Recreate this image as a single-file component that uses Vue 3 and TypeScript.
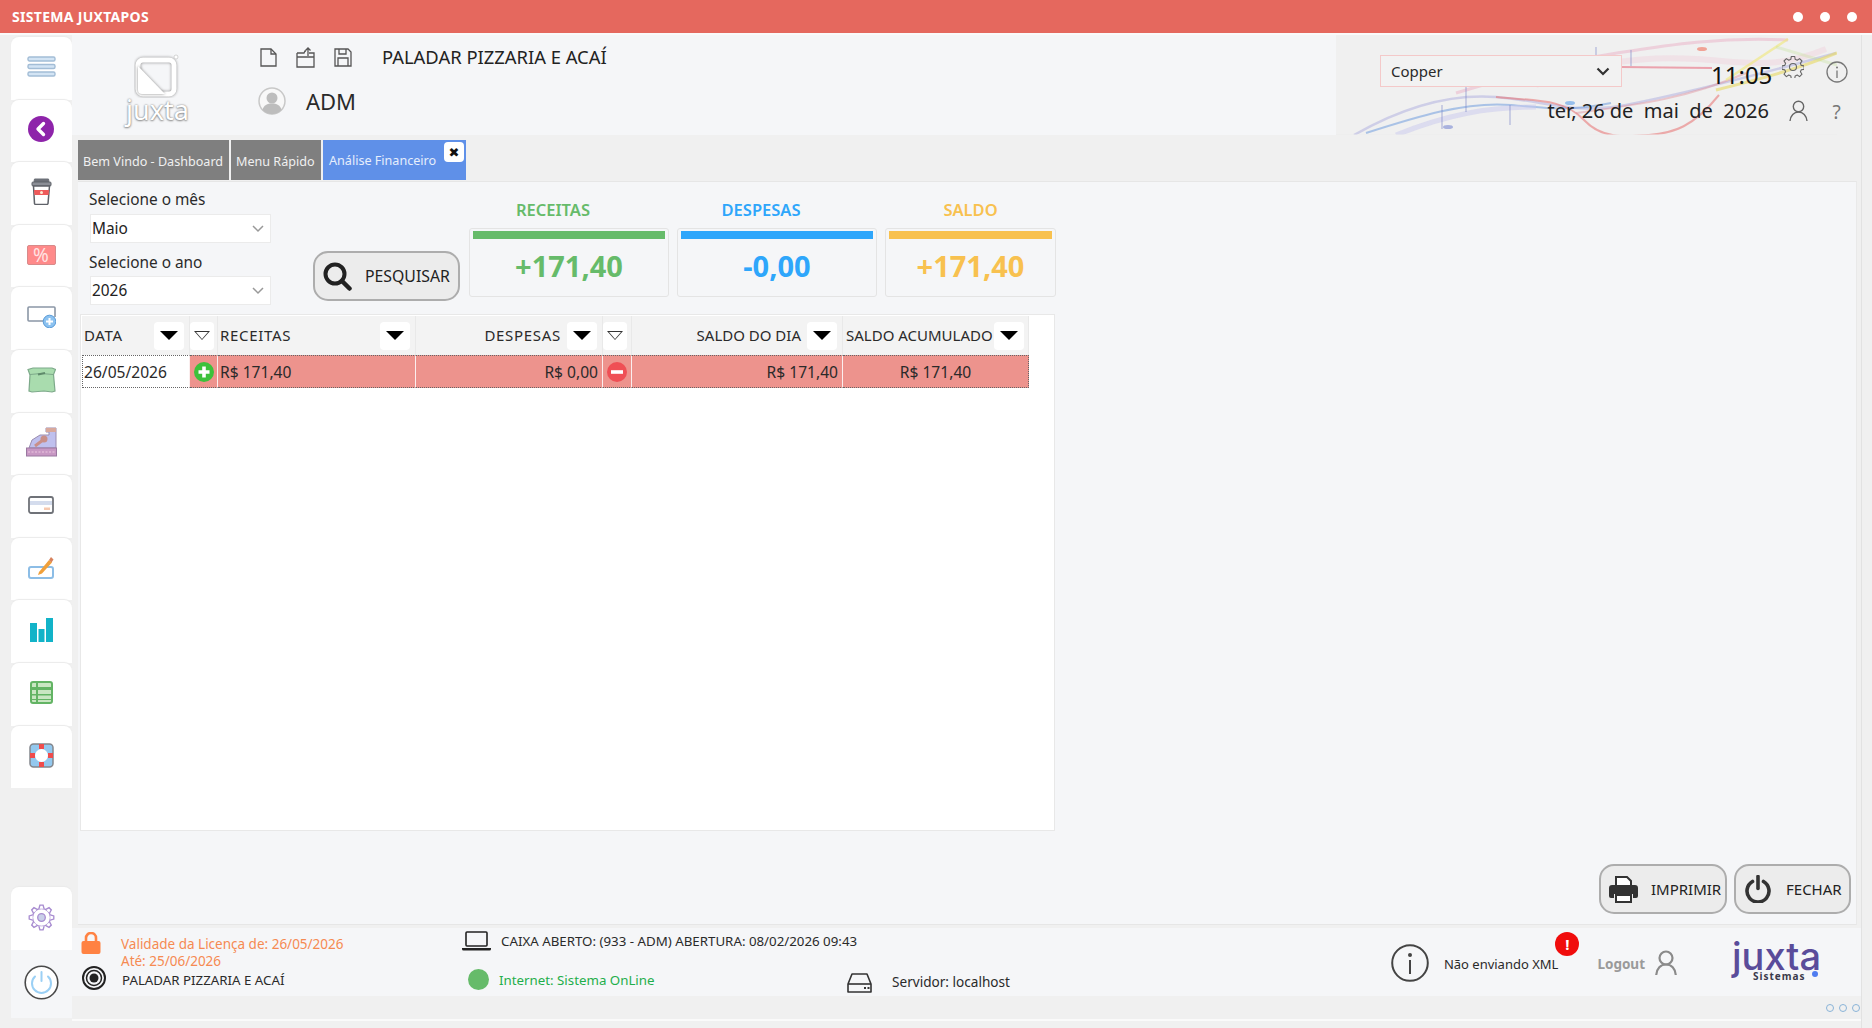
<template>
  <div class="janela">
    <div class="titulo">
      <span class="titulo-texto">SISTEMA JUXTAPOS</span>
      <div class="titulo-botoes"><i></i><i></i><i></i></div>
    </div>

    <div class="corpo">
      <!-- Menu lateral -->
      <aside class="lateral">
        <div class="lat-item">
          <svg width="29" height="21" viewBox="0 0 29 21"><g fill="#d3e4f4" stroke="#a3bdd6" stroke-width="1.4"><rect x="1" y="1" width="27" height="4" rx="1.5"/><rect x="1" y="8.5" width="27" height="4" rx="1.5"/><rect x="1" y="16" width="27" height="4" rx="1.5"/></g></svg>
        </div>
        <div class="lat-item">
          <svg width="26" height="26" viewBox="0 0 26 26"><circle cx="13" cy="13" r="13" fill="#8e24aa"/><path d="M15.5 7.5 10 13l5.500 5.500" fill="none" stroke="#fff" stroke-width="3.400" stroke-linecap="round" stroke-linejoin="round"/></svg>
        </div>
        <div class="lat-item">
          <svg width="21" height="27" viewBox="0 0 21 27"><path d="M3 3.500h15L17.500 1h-14z" fill="#6d7078" stroke="#6d7078"/><rect x="1" y="4" width="19" height="4" rx="1" fill="#8b8e96" stroke="#5f6269"/><path d="M2.500 8h16l-1.500 17.500a1.500 1.500 0 0 1-1.500 1h-10.500a1.500 1.500 0 0 1-1.500-1z" fill="#fff" stroke="#5f6269" stroke-width="1.500"/><path d="M3 12h15l-.4 5H3.400z" fill="#ee5a5a"/><circle cx="10.500" cy="14.500" r="1.500" fill="#ffe9d0"/></svg>
        </div>
        <div class="lat-item">
          <div class="icone-pct">%</div>
        </div>
        <div class="lat-item">
          <svg width="29" height="22" viewBox="0 0 29 22"><path d="M24 15H2a1 1 0 0 1-1-1V2a1 1 0 0 1 1-1h25a1 1 0 0 1 1 1v9" fill="#fff" stroke="#8b97a6" stroke-width="1.600"/><circle cx="22.500" cy="15.500" r="6.300" fill="#8cc2f0" stroke="#5a9bd8"/><path d="M22.500 12v7M19 15.500h7" stroke="#fff" stroke-width="2"/></svg>
        </div>
        <div class="lat-item">
          <svg width="29" height="26" viewBox="0 0 29 26"><path d="M1 2.500 6 1h19l3.500 1.500-2 5L28 24l-3 1-8-1-12 1-3-1 1-16z" fill="#a9dcae" stroke="#7da98a" stroke-width="1.200"/><path d="M3 7.500 14 6.500l12 1" fill="none" stroke="#7da98a"/><path d="M11 7.500l7-1.500" stroke="#5f8a6b" stroke-width="2"/></svg>
        </div>
        <div class="lat-item">
          <svg width="31" height="30" viewBox="0 0 31 30"><path d="M3 21 6 13 14 8h9V5h-3V1h10v20z" fill="#bfc0ee" stroke="#9a8cb0"/><path d="M20 1h10v4H20z" fill="#d8a89c"/><circle cx="18" cy="12" r="3.500" fill="#c98f88"/><path d="m9 19 8-6" stroke="#c98f88" stroke-width="3"/><rect x="0.500" y="21" width="30" height="8" fill="#c898c4" stroke="#9a78a0"/><path d="M2 25h27" stroke="#ecc8e0" stroke-dasharray="2 1.500"/></svg>
        </div>
        <div class="lat-item">
          <svg width="26" height="18" viewBox="0 0 26 18"><rect x="1" y="1" width="24" height="16" rx="2" fill="#fff" stroke="#6f7278" stroke-width="1.800"/><path d="M2 5h22v4H2z" fill="#d4dced"/><rect x="16" y="11.500" width="6" height="2.500" fill="#f6c9b0"/></svg>
        </div>
        <div class="lat-item">
          <svg width="26" height="23" viewBox="0 0 26 23"><rect x="1" y="11" width="24" height="11" rx="2" fill="#fff" stroke="#8cbde6" stroke-width="2"/><path d="M11 16 21 4l3 2.500-10 11-4 1.500z" fill="#f0a03a"/><path d="m21 4 2-3 2.500 2.500-2 3z" fill="#d8825c"/></svg>
        </div>
        <div class="lat-item">
          <svg width="23" height="24" viewBox="0 0 23 24"><path d="M0 5h7v19H0zM8.500 11h6v13h-6zM16 0h7v24h-7z" fill="#12b3c8"/></svg>
        </div>
        <div class="lat-item">
          <svg width="23" height="23" viewBox="0 0 23 23"><rect x="1" y="1" width="21" height="21" rx="2" fill="#c9e6c2" stroke="#63b464" stroke-width="2"/><path d="M1 6h21v3H1zM1 13h21v1.500H1zM1 18h21v1H1zM6 1h2v21H6z" fill="#63b464"/></svg>
        </div>
        <div class="lat-item">
          <svg width="25" height="25" viewBox="0 0 25 25"><rect x="1" y="1" width="23" height="23" rx="3.500" fill="#93c8ee" stroke="#83868c" stroke-width="1.500"/><path d="M10 1h5v5h-5zM10 19h5v5h-5zM1 10h5v5H1zM19 10h5v5h-5z" fill="#ef4c4c"/><circle cx="12.500" cy="12.500" r="6.500" fill="#fff"/></svg>
        </div>

        <div class="lat-item lat-config">
          <svg width="27" height="27" viewBox="-13.500 -13.500 27 27"><g fill="none" stroke="#a78bd0" stroke-width="1.300"><circle r="9"/><circle r="3.800" fill="#c9cfe8"/><g v-for="a in [0, 45, 90, 135, 180, 225, 270, 315]" :key="a" :transform="`rotate(${a})`"><path d="M-2.600-8.800-1.600-12.300H1.600L2.600-8.800" fill="#fff"/></g></g></svg>
        </div>
        <div class="lat-item lat-desligar">
          <svg width="35" height="35" viewBox="0 0 35 35"><circle cx="17.500" cy="17.500" r="16.300" fill="#fff" stroke="#4a4a4a" stroke-width="1.600"/><path d="M11 11.500a9.500 9.500 0 1 0 13 0" fill="none" stroke="#9bd0f5" stroke-width="2" stroke-linecap="round"/><path d="M17.500 7v9" stroke="#9bd0f5" stroke-width="2" stroke-linecap="round"/></svg>
        </div>
      </aside>

      <main class="principal">
        <!-- Cabecalho -->
        <header class="cabecalho">
          <div class="marca">
            <div class="logo-fantasma">
              <svg width="46" height="44" viewBox="0 0 46 44"><rect x="4" y="6" width="36" height="34" rx="5" fill="none" stroke="#fff" stroke-width="5" filter="drop-shadow(0 0 1.500px #888)"/><path d="M4 12 31 40H8a4 4 0 0 1-4-4z" fill="#fff" filter="drop-shadow(0 0 1.500px #888)"/><circle cx="42" cy="3" r="2" fill="#fff" stroke="#bbb" stroke-width=".6"/></svg>
              <span>juxta</span>
            </div>
            <div class="marca-info">
              <div class="marca-linha">
                <div class="marca-icones">
                  <svg width="17" height="19" viewBox="0 0 17 19"><path d="M1 1h10l5 5v12H1z" fill="none" stroke="#555" stroke-width="1.300"/><path d="M11 1v5h5" fill="none" stroke="#555" stroke-width="1.300"/></svg>
                  <svg width="19" height="21" viewBox="0 0 19 21"><path d="M1 6h7l1-2h1M1 6v14h17V6h-5M1 10h17" fill="none" stroke="#555" stroke-width="1.300"/><path d="M12 9V1M9.500 3.500 12 1l2.500 2.500" fill="none" stroke="#555" stroke-width="1.300"/></svg>
                  <svg width="18" height="19" viewBox="0 0 18 19"><path d="M1 1h13l3 3v14H1z" fill="none" stroke="#555" stroke-width="1.300"/><path d="M5 1v5h7V1M4 18v-8h10v8" fill="none" stroke="#555" stroke-width="1.300"/></svg>
                </div>
                <span class="empresa">PALADAR PIZZARIA E ACAÍ</span>
              </div>
              <div class="marca-linha linha-usuario">
                <svg width="28" height="28" viewBox="0 0 28 28"><circle cx="14" cy="14" r="13" fill="#f8f8f8" stroke="#c8c8c8" stroke-width="1.500"/><circle cx="14" cy="11" r="5.500" fill="#bdbdbd"/><path d="M4.500 23c1-5 5-6.500 9.500-6.500s8.500 1.500 9.500 6.500a13 13 0 0 1-19 0z" fill="#bdbdbd"/></svg>
                <span class="usuario">ADM</span>
              </div>
            </div>
          </div>

          <div class="cab-direita">
            <svg class="ondas" width="501" height="100" viewBox="0 0 501 100" fill="none">
              <path d="M18 100C60 76 110 58 160 62s80 18 130 8 110-24 210-52" stroke="#8f8fd8" stroke-opacity=".35" stroke-width="2.500"/>
              <path d="M30 98C80 82 130 66 175 70s60 6 100-2" stroke="#7aa3e0" stroke-opacity=".6" stroke-width="2"/>
              <path d="M60 100C110 80 150 72 200 72" stroke="#c8c8ee" stroke-opacity=".5" stroke-width="5"/>
              <path d="M120 58C180 40 230 26 281 18s100-16 171-13" stroke="#e8a8c0" stroke-opacity=".45" stroke-width="3"/>
              <path d="M200 50C250 30 300 20 360 24s80 10 130-10" stroke="#f0c8d8" stroke-opacity=".35" stroke-width="6"/>
              <path d="M285 32 376 33" stroke="#e88090" stroke-opacity=".7" stroke-width="2"/>
              <path d="M160 62c50 4 70 4 88 23s40 17 65 15 44-8 70-40" stroke="#e87070" stroke-opacity=".55" stroke-width="2"/>
              <path d="M240 78c60-8 110-14 170-40" stroke="#e0909c" stroke-opacity=".45" stroke-width="2"/>
              <path d="M380 55C420 45 460 35 501 18" stroke="#e8d860" stroke-opacity=".6" stroke-width="3"/>
              <path d="M390 45 452 4" stroke="#f0e880" stroke-opacity=".65" stroke-width="2.500"/>
              <path d="M440 12 501 30" stroke="#bfe090" stroke-opacity=".3" stroke-width="3"/>
              <path d="M130 45v32M106 70v24M260 12v20M295 15v16M174 70v20" stroke="#7a86c8" stroke-opacity=".5" stroke-width="1.300"/>
              <ellipse cx="112" cy="92" rx="5" ry="2" fill="#6f7fd0" fill-opacity=".55"/>
              <ellipse cx="234" cy="68" rx="5" ry="2" fill="#6fa8e8" fill-opacity=".7"/>
              <ellipse cx="366" cy="14" rx="5" ry="2" fill="#f09080" fill-opacity=".8"/>
              <path d="M0 100h501" stroke="#ececec"/>
            </svg>
            <div class="cab-conteudo">
              <div class="tema">
                <span>Copper</span>
                <svg width="14" height="9" viewBox="0 0 14 9"><path d="m1.500 1.500 5.500 5.500 5.500-5.500" fill="none" stroke="#333" stroke-width="2.200"/></svg>
              </div>
              <span class="hora">11:05</span>
              <svg class="ico-eng" width="22" height="22" viewBox="-11 -11 22 22"><g fill="none" stroke="#666" stroke-width="1.100"><circle r="3.500"/><path d="M-1.700-10.500h3.400l.5 2.800 2 .9 2.400-1.600 2.400 2.400-1.600 2.400.9 2 2.800.5v3.400l-2.800.5-.9 2 1.600 2.400-2.400 2.400-2.400-1.600-2 .9-.5 2.800h-3.400l-.5-2.800-2-.9-2.400 1.600-2.400-2.400 1.600-2.400-.9-2-2.800-.5v-3.400l2.800-.5.9-2-1.600-2.400 2.400-2.400 2.400 1.600 2-.9z" stroke-linejoin="round"/></g></svg>
              <svg class="ico-info" width="22" height="22" viewBox="0 0 22 22"><circle cx="11" cy="11" r="10" fill="none" stroke="#777" stroke-width="1.300"/><circle cx="11" cy="6.500" r="1" fill="#777"/><path d="M11 9.500v7.500" stroke="#777" stroke-width="1.300"/></svg>
              <span class="data">ter, 26 de&nbsp; mai&nbsp; de&nbsp; 2026</span>
              <svg class="ico-user" width="19" height="22" viewBox="0 0 19 22"><circle cx="9.500" cy="6.500" r="5.200" fill="none" stroke="#666" stroke-width="1.400"/><path d="M1 21c.5-5.500 4-9 8.500-9s8 3.500 8.500 9" fill="none" stroke="#666" stroke-width="1.400"/></svg>
              <span class="ajuda">?</span>
            </div>
          </div>
        </header>

        <!-- Abas -->
        <nav class="abas">
          <div class="aba aba-1">Bem Vindo - Dashboard</div>
          <div class="aba aba-2">Menu Rápido</div>
          <div class="aba aba-ativa">
            Análise Financeiro
            <span class="aba-fechar">✖</span>
          </div>
        </nav>

        <section class="conteudo">
          <div class="topo">
            <div class="filtros">
              <label>Selecione o mês</label>
              <div class="campo">
                <select v-model="mes"><option v-for="m in meses" :key="m">{{ m }}</option></select>
                <svg width="12" height="8" viewBox="0 0 12 8"><path d="m1 1 5 5 5-5" fill="none" stroke="#999" stroke-width="1.500"/></svg>
              </div>
              <label class="rotulo-ano">Selecione o ano</label>
              <div class="campo">
                <select v-model="ano"><option>2025</option><option>2026</option></select>
                <svg width="12" height="8" viewBox="0 0 12 8"><path d="m1 1 5 5 5-5" fill="none" stroke="#999" stroke-width="1.500"/></svg>
              </div>
            </div>

            <button class="botao btn-pesquisar">
              <svg width="30" height="30" viewBox="0 0 30 30"><circle cx="13" cy="13" r="9.500" fill="none" stroke="#222" stroke-width="4"/><path d="m20 20 7.500 7.500" stroke="#222" stroke-width="4.500" stroke-linecap="round"/></svg>
              <span>PESQUISAR</span>
            </button>

            <div class="cards">
              <div v-for="c in resumo" :key="c.titulo" class="card-coluna" :class="c.classe">
                <div class="card-titulo">{{ c.titulo }}</div>
                <div class="card">
                  <div class="card-barra"></div>
                  <div class="card-valor">{{ c.valor }}</div>
                </div>
              </div>
            </div>
          </div>

          <div class="tabela-painel">
            <div class="tabela">
              <div class="th th-larga"><span>DATA</span><span class="filtro"><i class="seta"></i></span></div>
              <div class="th th-ico"><span class="filtro"><i class="seta-vazia"></i></span></div>
              <div class="th th-larga"><span>RECEITAS</span><span class="filtro"><i class="seta"></i></span></div>
              <div class="th th-dir th-larga"><span>DESPESAS</span><span class="filtro"><i class="seta"></i></span></div>
              <div class="th th-ico"><span class="filtro"><i class="seta-vazia"></i></span></div>
              <div class="th th-dir"><span>SALDO DO DIA</span><span class="filtro"><i class="seta"></i></span></div>
              <div class="th th-acum"><span>SALDO ACUMULADO</span><span class="filtro"><i class="seta"></i></span></div>

              <div class="td td-data">26/05/2026</div>
              <div class="td td-ico">
                <svg width="20" height="20" viewBox="0 0 20 20"><circle cx="10" cy="10" r="10" fill="#3cc13b"/><path d="M10 4.500v11M4.500 10h11" stroke="#fff" stroke-width="3.600"/></svg>
              </div>
              <div class="td">R$ 171,40</div>
              <div class="td td-dir">R$ 0,00</div>
              <div class="td td-ico">
                <svg width="20" height="20" viewBox="0 0 20 20"><circle cx="10" cy="10" r="10" fill="#ef4f55"/><path d="M4 10h12" stroke="#fff" stroke-width="3.600"/></svg>
              </div>
              <div class="td td-dir">R$ 171,40</div>
              <div class="td td-centro">R$ 171,40</div>
            </div>
          </div>

          <div class="acoes">
            <button class="botao btn-imprimir">
              <svg width="29" height="27" viewBox="0 0 29 27"><path d="M7 10V1h11l4 4v5" fill="#fff" stroke="#333" stroke-width="2"/><path d="M3 9h23a3 3 0 0 1 3 3v8a2 2 0 0 1-2 2h-3v-4H5v4H2a2 2 0 0 1-2-2v-8a3 3 0 0 1 3-3z" fill="#333"/><path d="M7 19h15v7H7z" fill="#fff" stroke="#333" stroke-width="2"/></svg>
              <span>IMPRIMIR</span>
            </button>
            <button class="botao btn-fechar">
              <svg width="26" height="28" viewBox="0 0 26 28"><path d="M7.500 6.500a11 11 0 1 0 11 0" fill="none" stroke="#333" stroke-width="3.600" stroke-linecap="round"/><path d="M13 1.500v12" stroke="#333" stroke-width="3.600" stroke-linecap="round"/></svg>
              <span>FECHAR</span>
            </button>
          </div>
        </section>

        <!-- Rodape -->
        <footer class="rodape">
          <div class="rod-grade">
            <div class="rod-celula rod-licenca">
              <svg width="20" height="22" viewBox="0 0 20 22"><path d="M5 10V6a5 5 0 0 1 10 0v4" fill="none" stroke="#ff8243" stroke-width="2.600"/><rect x="0.500" y="9" width="19" height="13" rx="2" fill="#ff8243"/></svg>
              <div class="licenca-texto">Validade da Licença de: 26/05/2026<br>Até: 25/06/2026</div>
            </div>
            <div class="rod-celula rod-caixa">
              <svg width="29" height="20" viewBox="0 0 29 20"><rect x="4" y="1" width="21" height="14" rx="1" fill="none" stroke="#222" stroke-width="1.600"/><path d="M0 17h29v1a1.500 1.500 0 0 1-1.500 1.500h-26A1.500 1.500 0 0 1 0 18z" fill="#222"/></svg>
              <span>CAIXA ABERTO: (933 - ADM) ABERTURA: 08/02/2026 09:43</span>
            </div>
            <div></div>
            <div class="rod-celula rod-empresa">
              <svg width="24" height="24" viewBox="0 0 24 24"><circle cx="12" cy="12" r="11" fill="none" stroke="#222" stroke-width="2"/><circle cx="12" cy="12" r="7.500" fill="none" stroke="#222" stroke-width="1.500"/><circle cx="12" cy="12" r="4.500" fill="#222"/></svg>
              <span>PALADAR PIZZARIA E ACAÍ</span>
            </div>
            <div class="rod-celula rod-internet">
              <i class="bolinha"></i>
              <span>Internet: Sistema OnLine</span>
            </div>
            <div class="rod-celula rod-servidor">
              <svg width="25" height="20" viewBox="0 0 25 20"><path d="M5 1h15l4 10v8H1v-8z" fill="none" stroke="#333" stroke-width="1.600" stroke-linejoin="round"/><path d="M1 11h23" stroke="#333" stroke-width="1.600"/><path d="M17 15h2M20.500 15h2" stroke="#333" stroke-width="2"/></svg>
              <span>Servidor: localhost</span>
            </div>
          </div>

          <div class="rod-direita">
            <svg width="38" height="38" viewBox="0 0 38 38"><circle cx="19" cy="19" r="17.800" fill="none" stroke="#444" stroke-width="2"/><circle cx="19" cy="11" r="2" fill="#444"/><path d="M19 16v14" stroke="#444" stroke-width="2"/></svg>
            <div class="xml">
              Não enviando XML
              <span class="alerta">!</span>
            </div>
            <span class="logout">Logout</span>
            <svg width="22" height="26" viewBox="0 0 22 26"><circle cx="11" cy="8" r="6.500" fill="none" stroke="#8a8a8a" stroke-width="2.200"/><path d="M1.200 25c.5-6.500 4.500-10.500 9.800-10.500S20.300 18.500 20.800 25" fill="none" stroke="#8a8a8a" stroke-width="2.200"/></svg>
            <div class="juxta">
              <span class="juxta-nome">juxta</span>
              <span class="juxta-sub">Sistemas</span>
              <i class="juxta-ponto"></i>
            </div>
          </div>
        </footer>

        <div class="faixa">
          <div class="faixa-pontos"><i></i><i></i><i></i></div>
        </div>
      </main>
    </div>
  </div>
</template>

<script setup lang="ts">
import { ref } from 'vue';

// Filtros do periodo
const meses = ['Janeiro', 'Fevereiro', 'Março', 'Abril', 'Maio', 'Junho', 'Julho', 'Agosto', 'Setembro', 'Outubro', 'Novembro', 'Dezembro'];
const mes = ref('Maio');
const ano = ref('2026');

// Totais do resumo financeiro
const resumo = [
  { titulo: 'RECEITAS', valor: '+171,40', classe: 'verde' },
  { titulo: 'DESPESAS', valor: '-0,00', classe: 'azul' },
  { titulo: 'SALDO', valor: '+171,40', classe: 'amarelo' },
];
</script>

<style>
html, body {
  margin: 0;
  background: #f0f0f0;
}
</style>

<style scoped>
.janela {
  width: 1872px;
  height: 1028px;
  display: flex;
  flex-direction: column;
  overflow: hidden;
  background: #f0f0f0;
  font-family: "Noto Sans", "DejaVu Sans", sans-serif;
  color: #2a2a2a;
}

.titulo {
  height: 33px;
  flex: none;
  display: flex;
  align-items: center;
  justify-content: space-between;
  padding: 0 15px 0 12px;
  background: #e5685e;
  border-bottom: 2px solid #fafafa;
}
.titulo-texto {
  color: #fff;
  font-size: 14px;
  font-weight: 700;
  letter-spacing: .3px;
}
.titulo-botoes {
  display: flex;
  gap: 17px;
}
.titulo-botoes i {
  width: 10px;
  height: 10px;
  border-radius: 50%;
  background: #fff;
}

.corpo {
  flex: 1;
  display: flex;
  min-height: 0;
}

.lateral {
  width: 61px;
  flex: none;
  margin-left: 11px;
  padding: 2px 0 10px;
  display: flex;
  flex-direction: column;
}
.lat-item {
  height: 62.6px;
  flex: none;
  display: flex;
  align-items: center;
  justify-content: center;
  box-sizing: border-box;
  padding-bottom: 3px;
  padding-right: 1px;
  background: #fff;
  border-radius: 8px 8px 0 0;
  box-shadow: 0 -1px 1px #eaeaea;
}
.lat-config {
  margin-top: auto;
}
.lat-desligar {
  height: 68px;
  background: #f5f6f8;
  border-radius: 0;
  box-shadow: none;
}
.icone-pct {
  width: 29px;
  height: 20px;
  display: flex;
  align-items: center;
  justify-content: center;
  background: #ff8a8a;
  border: 1px solid #d88a8a;
  border-radius: 2px;
  box-sizing: border-box;
  color: #ffe3e3;
  font-size: 19px;
}

.principal {
  flex: 1;
  min-width: 0;
  display: flex;
  flex-direction: column;
  margin-right: 10px;
  border-right: 1px solid #e2e2e2;
}

.cabecalho {
  height: 100px;
  flex: none;
  display: flex;
}
.marca {
  width: 1264px;
  flex: none;
  display: flex;
  background: #f5f6f8;
}
.logo-fantasma {
  width: 120px;
  margin-left: 54px;
  padding-top: 19px;
  display: flex;
  flex-direction: column;
  align-items: flex-start;
}
.logo-fantasma svg {
  margin-left: 8px;
}
.logo-fantasma span {
  margin-top: -1px;
  color: #fff;
  font-size: 27px;
  line-height: 26px;
  text-shadow: 0 0 2px #777, 0 1px 2px #999;
}
.marca-info {
  margin-left: 14px;
  padding-top: 10px;
}
.marca-linha {
  display: flex;
  align-items: center;
}
.marca-icones {
  width: 122px;
  display: flex;
  align-items: center;
  gap: 19px;
}
.marca-icones svg {
  flex: none;
}
.empresa {
  font-size: 18.4px;
  line-height: 24px;
  color: #222;
}
.linha-usuario {
  margin-top: 16px;
  margin-left: -2px;
}
.usuario {
  margin-left: 20px;
  font-size: 22px;
  line-height: 32px;
}

.cab-direita {
  flex: 1;
  position: relative;
  background: #f0f0f0;
}
.ondas {
  position: absolute;
  left: 0;
  top: 0;
  filter: blur(.5px);
}
.cab-conteudo {
  position: relative;
  height: 100%;
  display: grid;
  grid-template-columns: 44px 242px 89px 58px 13px 22px 22px 21px;
  grid-template-rows: 20px 32px 48px;
}
.tema {
  grid-column: 2;
  grid-row: 2;
  display: flex;
  align-items: center;
  justify-content: space-between;
  box-sizing: border-box;
  padding: 0 11px 0 10px;
  border: 1px solid #f4c9c9;
  background: #f2f2f2;
  font-size: 15px;
}
.hora {
  grid-column: 4;
  grid-row: 2;
  font-size: 24px;
  line-height: 38px;
  margin-top: 1px;
  color: #111;
  white-space: nowrap;
}
.ico-eng {
  grid-column: 6;
  grid-row: 1 / 3;
  margin-top: 21px;
}
.ico-info {
  grid-column: 8;
  grid-row: 2;
  margin-top: 6px;
}
.data {
  grid-column: 1 / 5;
  grid-row: 3;
  justify-self: end;
  margin-top: 9px;
  font-size: 20px;
  line-height: 30px;
  white-space: nowrap;
  color: #222;
}
.ico-user {
  grid-column: 6;
  grid-row: 3;
  margin-top: 13px;
  margin-left: 7px;
}
.ajuda {
  grid-column: 8;
  grid-row: 3;
  margin-top: 11px;
  font-size: 19px;
  line-height: 28px;
  color: #777;
  text-align: center;
}

.abas {
  height: 46px;
  flex: none;
  box-sizing: border-box;
  padding: 5px 0 0 6px;
  display: flex;
  gap: 2px;
}
.aba {
  height: 40px;
  box-sizing: border-box;
  display: flex;
  align-items: center;
  padding: 2px 5px 0;
  background: #7f7f7f;
  color: #f0f0f0;
  font-size: 12.6px;
  white-space: nowrap;
}
.aba-1 { width: 151px; }
.aba-2 { width: 90px; }
.aba-ativa {
  width: 143px;
  position: relative;
  padding-left: 6px;
  background: #5f90e8;
  color: #e6eefc;
  border-bottom: 1px solid #5f90e8;
}
.aba-fechar {
  position: absolute;
  right: 2px;
  top: 2px;
  width: 20px;
  height: 20px;
  display: flex;
  align-items: center;
  justify-content: center;
  background: #fff;
  border-radius: 4px;
  color: #111;
  font-size: 13px;
}

.conteudo {
  height: 744px;
  flex: none;
  margin-left: 6px;
  margin-right: 4px;
  box-sizing: border-box;
  display: flex;
  flex-direction: column;
  background: #f5f6f8;
  border-top: 1px solid #e6e6e6;
  border-bottom: 1px solid #e6e6e6;
  border-right: 1px solid #e9e9e9;
}

.topo {
  height: 132px;
  flex: none;
  display: flex;
  padding-left: 11px;
}
.filtros {
  width: 182px;
  padding-top: 8px;
}
.filtros label {
  display: block;
  height: 20px;
  margin-bottom: 4px;
  font-size: 15.4px;
  line-height: 20px;
}
.filtros .rotulo-ano {
  margin-top: 10px;
  margin-bottom: 3px;
}
.campo {
  position: relative;
  margin-left: 1px;
  height: 29px;
}
.campo select {
  width: 100%;
  height: 100%;
  box-sizing: border-box;
  padding: 0 1px;
  border: 1px solid #ebebeb;
  background: #fff;
  appearance: none;
  outline: none;
  font-family: inherit;
  font-size: 15.4px;
  color: #222;
}
.campo svg {
  position: absolute;
  right: 7px;
  top: 11px;
  pointer-events: none;
}

.botao {
  display: flex;
  align-items: center;
  box-sizing: border-box;
  height: 50px;
  padding: 0;
  border: 2px solid #adadad;
  border-radius: 15px;
  background: #ececec;
  font-family: inherit;
  font-size: 15px;
  color: #222;
}
.btn-pesquisar {
  width: 147px;
  flex: none;
  margin: 69px 0 0 42px;
  padding-left: 7px;
  gap: 13px;
  font-size: 15.8px;
}

.cards {
  margin-left: 9px;
  display: flex;
  gap: 8px;
}
.card-coluna {
  width: 200px;
  padding-top: 18px;
}
.card-coluna.amarelo {
  width: 171px;
}
.card-titulo {
  height: 20px;
  margin-bottom: 8px;
  padding-right: 32px;
  text-align: center;
  font-size: 16.500px;
  line-height: 20px;
  font-weight: 600;
}
.amarelo .card-titulo {
  padding-right: 0;
}
.card {
  height: 69px;
  box-sizing: border-box;
  padding: 2px 3px 0;
  border: 1px solid #e4e4e4;
  border-radius: 3px;
}
.card-barra {
  height: 8px;
}
.card-valor {
  margin-top: 9px;
  text-align: center;
  font-size: 29px;
  line-height: 36px;
  font-weight: 700;
}
.verde .card-titulo, .verde .card-valor { color: #66bb6a; }
.azul .card-titulo, .azul .card-valor { color: #2ea6fb; }
.amarelo .card-titulo, .amarelo .card-valor { color: #f8c14f; }
.verde .card-barra { background: #66bb6a; }
.azul .card-barra { background: #2ea6fb; }
.amarelo .card-barra { background: #f8c14f; }

.tabela-painel {
  width: 975px;
  height: 517px;
  flex: none;
  margin-left: 2px;
  box-sizing: border-box;
  padding: 1px 0 0 1px;
  background: #fff;
  border: 1px solid #e8e8e8;
}
.tabela {
  width: 947px;
  display: grid;
  grid-template-columns: 108px 28px 198px 187px 29px 211px 186px;
  grid-template-rows: 39px 33px;
  font-size: 15px;
}
.th {
  display: flex;
  align-items: center;
  justify-content: space-between;
  box-sizing: border-box;
  padding: 0 5px 0 2px;
  background: #f3f3f3;
  border-right: 1px solid #e9e9e9;
  white-space: nowrap;
}
.th > span:not(.filtro) {
  margin-top: -2px;
}
.th-larga span:first-child {
  letter-spacing: .7px;
}
.th-dir {
  justify-content: flex-end;
  gap: 6px;
}
.th-ico {
  padding: 0 3px 0 0;
}
.th-acum {
  padding-left: 3px;
  padding-right: 4px;
}
.filtro {
  width: 30px;
  height: 28px;
  flex: none;
  display: flex;
  align-items: center;
  justify-content: center;
  background: #fff;
  border-radius: 4px;
}
.th-ico .filtro {
  width: 24px;
}
.seta {
  border-left: 9px solid transparent;
  border-right: 9px solid transparent;
  border-top: 9px solid #000;
}
.seta-vazia {
  position: relative;
  border-left: 8px solid transparent;
  border-right: 8px solid transparent;
  border-top: 9px solid #333;
}
.seta-vazia::after {
  content: "";
  position: absolute;
  left: -6px;
  top: -8px;
  border-left: 6px solid transparent;
  border-right: 6px solid transparent;
  border-top: 7px solid #fff;
}
.td {
  display: flex;
  align-items: center;
  box-sizing: border-box;
  padding: 0 2px;
  background: #ed938d;
  border-right: 1px solid #fbeeee;
  border-top: 1px dotted #666;
  border-bottom: 1px dotted #666;
  font-size: 15.600px;
  white-space: nowrap;
}
.td-data {
  background: #fff;
  border-left: 1px dotted #666;
  padding-left: 1px;
}
.td-ico {
  justify-content: center;
  padding: 0;
}
.td-dir {
  justify-content: flex-end;
  padding-right: 4px;
}
.td-centro {
  justify-content: center;
  border-right: 1px dotted #666;
}

.acoes {
  margin-top: auto;
  margin-bottom: 10px;
  margin-right: 5px;
  display: flex;
  justify-content: flex-end;
  gap: 7px;
}
.btn-imprimir {
  width: 128px;
  padding-left: 8px;
  gap: 13px;
}
.btn-fechar {
  width: 117px;
  padding-left: 9px;
  gap: 15px;
}

.rodape {
  height: 68px;
  flex: none;
  margin-top: 3px;
  display: flex;
  background: #f5f6f8;
}
.rod-grade {
  padding-left: 9px;
  display: grid;
  grid-template-columns: 381px 385px 300px;
  grid-template-rows: 40px 28px;
  font-size: 13.300px;
}
.rod-celula {
  display: flex;
  align-items: center;
  white-space: nowrap;
}
.rod-celula svg {
  flex: none;
}
.rod-licenca {
  align-items: flex-start;
  padding-top: 4px;
}
.licenca-texto {
  margin-left: 20px;
  margin-top: 4px;
  color: #f58a52;
  font-size: 13.500px;
  line-height: 17px;
}
.rod-caixa {
  align-items: flex-start;
  padding-top: 3px;
}
.rod-caixa span {
  margin-left: 10px;
  margin-top: 1px;
}
.rod-empresa {
  align-items: flex-start;
}
.rod-empresa svg {
  margin-left: 1px;
  margin-top: -2px;
}
.rod-empresa span {
  margin-left: 16px;
  margin-top: 3px;
}
.rod-internet {
  align-items: flex-start;
}
.bolinha {
  width: 21px;
  height: 21px;
  margin: 1px 0 0 6px;
  border-radius: 50%;
  background: #66bb6a;
}
.rod-internet span {
  margin-left: 10px;
  margin-top: 3px;
  color: #1fae4b;
}
.rod-servidor {
  align-items: flex-start;
}
.rod-servidor svg {
  margin-top: 5px;
}
.rod-servidor span {
  margin-left: 20px;
  margin-top: 4px;
  font-size: 13.600px;
}

.rod-direita {
  margin-left: auto;
  padding: 2px 42px 0 0;
  display: flex;
  align-items: center;
}
.xml {
  position: relative;
  margin-left: 15px;
  margin-top: 2px;
  font-size: 13px;
  white-space: nowrap;
}
.alerta {
  position: absolute;
  right: -21px;
  top: -23px;
  width: 24px;
  height: 24px;
  display: flex;
  align-items: center;
  justify-content: center;
  border-radius: 50%;
  background: #f00c0c;
  color: #fff;
  font-size: 15px;
  font-weight: 700;
}
.logout {
  margin-left: 39px;
  margin-right: 10px;
  margin-top: 2px;
  color: #9a9a9a;
  font-size: 13.500px;
  font-weight: 700;
}
.juxta {
  position: relative;
  width: 90px;
  height: 38px;
  margin-left: 52px;
  margin-top: -2px;
}
.juxta-nome {
  position: absolute;
  left: 3px;
  top: 0;
  color: #5a4c9a;
  font-family: "Inter", sans-serif;
  font-size: 38px;
  line-height: 26px;
  font-weight: 500;
  letter-spacing: 0;
}
.juxta-sub {
  position: absolute;
  left: 24px;
  top: 29px;
  color: #3a3a4a;
  font-size: 10px;
  line-height: 9px;
  font-weight: 700;
  letter-spacing: 1px;
}
.juxta-ponto {
  position: absolute;
  right: 1px;
  top: 28px;
  width: 6px;
  height: 6px;
  border-radius: 50%;
  background: #4f7cf0;
}

.faixa {
  height: 23px;
  flex: none;
  display: flex;
  justify-content: flex-end;
  align-items: center;
  padding-right: 1px;
  border-bottom: 2px solid #fafafa;
}
.faixa-pontos {
  display: flex;
  gap: 5px;
}
.faixa-pontos i {
  width: 6px;
  height: 6px;
  border: 1px solid #8ab4d8;
  border-radius: 50%;
}
</style>
